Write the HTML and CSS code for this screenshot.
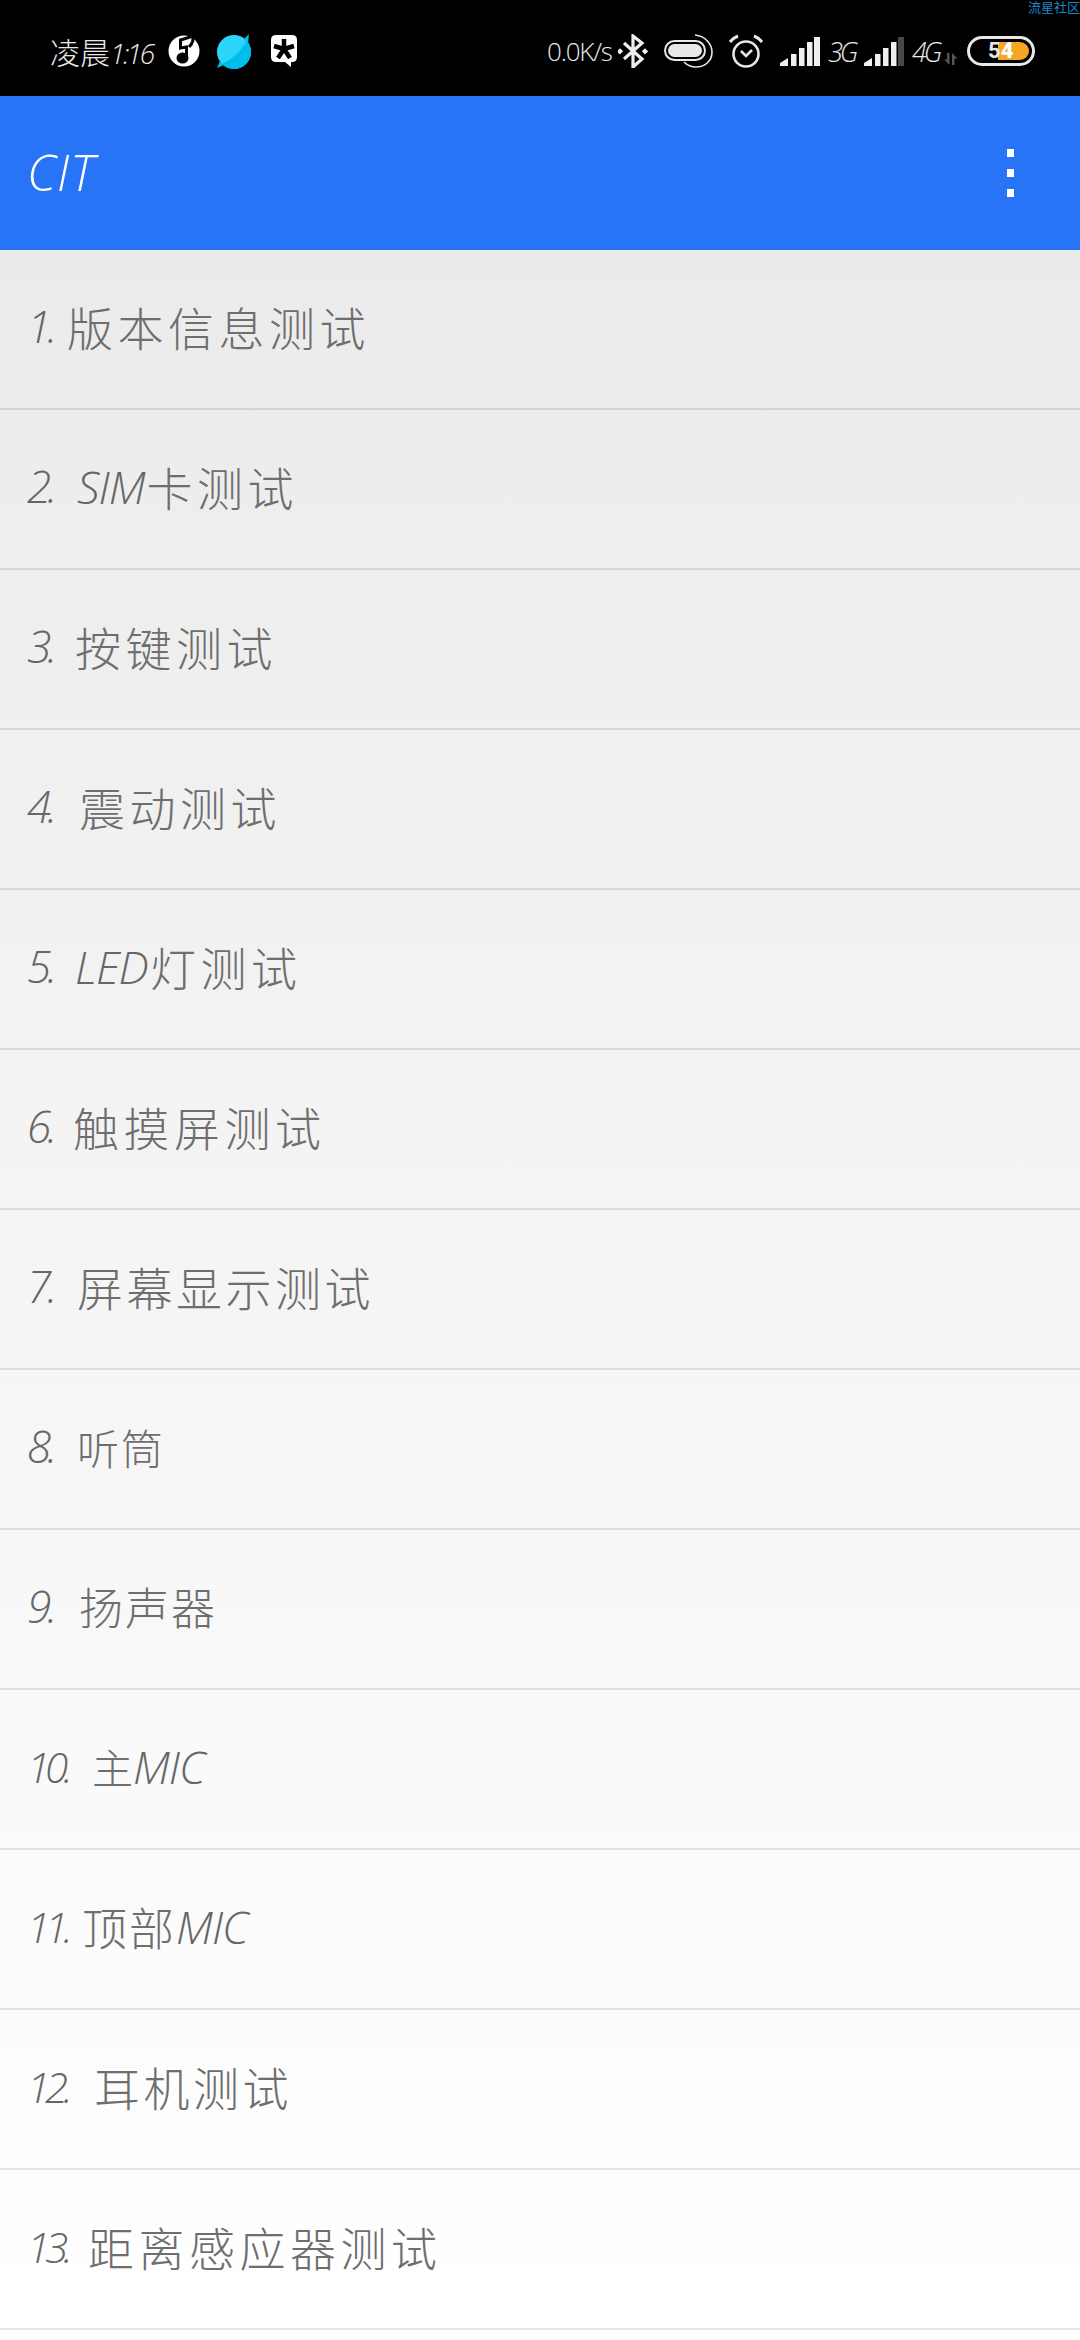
FILE: index.html
```html
<!DOCTYPE html>
<html lang="zh-CN">
<head>
    <meta charset="UTF-8">
    <meta name="viewport" content="width=device-width, initial-scale=1.0">
    <title>CIT</title>
    <link rel="stylesheet" href="styles.css">
</head>
<body>
    <div class="status-bar">
        <span class="watermark">流星社区</span>
        <div class="status-left">
            <span class="clock">凌晨<i>1:16</i></span>
            <svg class="ic-music" width="32" height="32" viewBox="0 0 32 32">
                <circle cx="16" cy="16" r="15.5" fill="#fff"/>
                <ellipse cx="14.5" cy="23" rx="6" ry="5.5" fill="#000"/>
                <path d="M18.5 23 V12 L12.5 13 V5 Q19 3 25 1" fill="none" stroke="#000" stroke-width="3"/>
                <path d="M24 1 Q27 6 21 12" fill="none" stroke="#000" stroke-width="3"/>
            </svg>
            <svg class="ic-planet" width="36" height="35" viewBox="0 0 36 35">
                <circle cx="18" cy="18" r="17" fill="#2dd5fc"/>
                <path d="M31 7 A17 17 0 0 1 6 30 Q20 24 31 7Z" fill="#00bdea"/>
                <path d="M28 5 L33 0 L32 9 Z M8 31 L1 34 L4 27 Z" fill="#00bdea"/>
            </svg>
            <svg class="ic-chat" width="26" height="32" viewBox="0 0 26 32">
                <path d="M5 0 H21 Q26 0 26 5 V22 Q26 27 21 27 H20 V32 L14 27 H5 Q0 27 0 22 V5 Q0 0 5 0Z" fill="#fff"/>
                <path d="M13 14 V4 M13 14 L23 11 M13 14 L19 23 M13 14 L7 23 M13 14 L3 11" stroke="#000" stroke-width="4.5" fill="none"/>
            </svg>
        </div>
        <div class="status-right">
            <span class="speed">0.0K/s</span>
            <svg class="ic-bt" width="30" height="34" viewBox="0 0 30 34" fill="none" stroke="#eee" stroke-width="3.2">
                <path d="M6 9 L24 25 L15 33 V2 L24 9 L6 25"/>
                <rect x="0" y="15" width="4.5" height="4.5" fill="#eee" stroke="none" transform="rotate(45 2 17)"/>
                <rect x="25" y="15" width="4.5" height="4.5" fill="#eee" stroke="none" transform="rotate(45 27 17)"/>
            </svg>
            <svg class="ic-hd" width="49" height="34" viewBox="0 0 49 34" fill="none" stroke="#e8e8e8">
                <rect x="1" y="7" width="40" height="19" rx="9.5" stroke-width="2"/>
                <rect x="4" y="10" width="34" height="13" rx="6.5" fill="#e8e8e8" stroke="none"/>
                <path d="M31 1 C42 2 48 11 48 18 C48 28 40 33 32 33 C27 33 23 31 20 28" stroke-width="1.6"/>
            </svg>
            <svg class="ic-alarm" width="34" height="34" viewBox="0 0 34 34" fill="none" stroke="#e8e8e8" stroke-width="2.6">
                <circle cx="17" cy="20" r="12.5"/>
                <path d="M12 17 L17 22 L23 16"/>
                <path d="M1 8 Q4 4 9 2 M33 8 Q30 4 25 2" stroke-width="3"/>
            </svg>
            <svg class="ic-signal" width="40" height="29" viewBox="0 0 40 29" fill="#f0f0f0">
                <path d="M0 29 V26 L8 21 V29Z"/>
                <rect x="11" y="17" width="5.5" height="12"/>
                <rect x="19" y="11" width="5.5" height="18"/>
                <rect x="27" y="5" width="5.5" height="24"/>
                <rect x="34" y="0" width="6" height="29"/>
            </svg>
            <span class="net">3G</span>
            <svg class="ic-signal" width="40" height="29" viewBox="0 0 40 29" fill="#f0f0f0">
                <path d="M0 29 V26 L8 21 V29Z"/>
                <rect x="11" y="17" width="5.5" height="12"/>
                <rect x="19" y="11" width="5.5" height="18"/>
                <rect x="27" y="5" width="5.5" height="24"/>
                <rect x="34" y="0" width="6" height="29" fill="#484848"/>
            </svg>
            <span class="net">4G</span>
            <svg class="ic-arrows" width="15" height="12" viewBox="0 0 15 12" fill="#555">
                <path d="M4 0 H6.5 V12 L1 6.5 H4Z M9 0 L14.5 5.5 H11.5 V12 H9Z"/>
            </svg>
            <div class="battery">
                <div class="battery-fill"></div>
                <span class="battery-num">5<b>4</b></span>
            </div>
        </div>
    </div>

    <div class="app-bar">
        <span class="app-title">CIT</span>
        <div class="overflow">
            <span class="dot"></span>
            <span class="dot"></span>
            <span class="dot"></span>
        </div>
    </div>

    <div class="test-list">
        <div class="test-row"><i class="num">1.</i>版本信息测试</div>
        <div class="test-row"><i class="num">2.</i><i class="latin">SIM</i>卡测试</div>
        <div class="test-row"><i class="num">3.</i>按键测试</div>
        <div class="test-row"><i class="num">4.</i>震动测试</div>
        <div class="test-row"><i class="num">5.</i><i class="latin">LED</i>灯测试</div>
        <div class="test-row"><i class="num">6.</i>触摸屏测试</div>
        <div class="test-row"><i class="num">7.</i>屏幕显示测试</div>
        <div class="test-row"><i class="num">8.</i>听筒</div>
        <div class="test-row"><i class="num">9.</i>扬声器</div>
        <div class="test-row"><i class="num">10.</i>主<i class="latin">MIC</i></div>
        <div class="test-row"><i class="num">11.</i>顶部<i class="latin">MIC</i></div>
        <div class="test-row"><i class="num">12.</i>耳机测试</div>
        <div class="test-row"><i class="num">13.</i>距离感应器测试</div>
    </div>
</body>
</html>
```

FILE: styles.css
```css
body {
    margin: 0;
    width: 1080px;
    height: 2340px;
    overflow: hidden;
    font-family: "Noto Sans CJK SC", sans-serif;
    background: #fff;
}

.status-bar {
    position: relative;
    box-sizing: border-box;
    height: 96px;
    background: #000;
    color: #e8e8e8;
    display: flex;
    justify-content: space-between;
    align-items: center;
    padding: 6px 45px 0 50px;
}

.watermark {
    position: absolute;
    top: 0;
    right: 0;
    font-size: 13px;
    line-height: 13px;
    color: #1f86c9;
}

.status-left, .status-right {
    display: flex;
    align-items: center;
}

.clock {
    font-size: 30px;
    font-weight: 300;
    width: 118px;
    white-space: nowrap;
}

.clock i {
    font-family: "Open Sans", sans-serif;
    font-weight: 300;
    font-size: 28px;
    letter-spacing: -2.5px;
}

.ic-planet { margin-left: 16px; }
.ic-chat { margin-left: 19px; }

.speed {
    font-family: "Open Sans", sans-serif;
    font-weight: 300;
    font-size: 26px;
    letter-spacing: -1.2px;
    width: 71px;
}

.ic-hd { margin-left: 16px; }
.ic-alarm { margin-left: 16px; }
.ic-signal { margin-left: 8px; }
.ic-alarm + .ic-signal { margin-left: 17px; }

.net {
    font-family: "Open Sans", sans-serif;
    font-style: italic;
    font-weight: 300;
    font-size: 27px;
    letter-spacing: -3px;
    width: 28px;
    margin-left: 8px;
}

.ic-arrows { margin: 15px 0 0 3px; }

.battery {
    position: relative;
    box-sizing: border-box;
    width: 68px;
    height: 30px;
    margin-left: 9px;
    padding: 3px;
    border: 3px solid #e8e8e8;
    border-radius: 15px;
}

.battery-fill {
    width: 31px;
    height: 18px;
    margin-left: 25px;
    background: #f5a623;
    border-radius: 0 9px 9px 0;
}

.battery-num {
    position: absolute;
    top: -3px;
    left: 18px;
    font-family: Roboto, sans-serif;
    font-size: 22px;
    line-height: 30px;
    font-weight: 700;
    color: #e8e8e8;
}

.battery-num b {
    color: #fff;
}

.app-bar {
    box-sizing: border-box;
    height: 154px;
    background: #2874f6;
    display: flex;
    justify-content: space-between;
    align-items: center;
    padding: 0 66px 0 27px;
}

.app-title {
    font-family: "Open Sans", sans-serif;
    font-style: italic;
    font-weight: 300;
    font-size: 49px;
    letter-spacing: 1px;
    color: #fff;
    margin-bottom: 2px;
}

.overflow {
    display: flex;
    flex-direction: column;
    gap: 12px;
}

.dot {
    width: 7px;
    height: 8px;
    background: #fff;
}

.test-list {
    background: linear-gradient(#ebebeb, #fff);
}

.test-row {
    box-sizing: border-box;
    height: 160px;
    padding: 0 0 6px 27px;
    border-bottom: 2px solid rgba(0, 0, 0, 0.1);
    display: flex;
    align-items: center;
    font-size: 46px;
    letter-spacing: 4.5px;
    color: #6e6e6e;
    font-weight: 300;
}

.num {
    flex: none;
    font-family: "Open Sans", sans-serif;
    font-weight: 300;
    font-size: 44px;
    letter-spacing: -4px;
    color: #666;
}

.latin {
    font-family: "Open Sans", sans-serif;
    font-weight: 300;
    font-size: 45px;
    letter-spacing: -1px;
    margin-right: 2px;
    color: #666;
}

/* the digits of the reference are not tabular, so each label starts elsewhere */
.test-row:nth-child(1) .num { width: 40px; }
.test-row:nth-child(2) .num { width: 50px; }
.test-row:nth-child(3) .num { width: 48px; }
.test-row:nth-child(4) .num { width: 52px; }
.test-row:nth-child(5) .num { width: 48px; }
.test-row:nth-child(6) .num { width: 46px; }
.test-row:nth-child(7) .num { width: 50px; }
.test-row:nth-child(8) .num { width: 50px; }
.test-row:nth-child(9) .num { width: 52px; }
.test-row:nth-child(10) .num { width: 65px; }
.test-row:nth-child(11) .num { width: 55px; }
.test-row:nth-child(12) .num { width: 67px; }
.test-row:nth-child(13) .num { width: 61px; }

.test-row:nth-child(n+10) .num { letter-spacing: -5px; font-size: 42px; }

.test-row:nth-child(7) { letter-spacing: 3.5px; }
.test-row:nth-child(8) { font-size: 42px; letter-spacing: 2px; }
.test-row:nth-child(9) { font-size: 44px; letter-spacing: 2px; }
.test-row:nth-child(10) { font-size: 41px; letter-spacing: 0; }
.test-row:nth-child(11) { font-size: 45px; letter-spacing: 2px; }
.test-row:nth-child(12) { letter-spacing: 3.5px; }
```
